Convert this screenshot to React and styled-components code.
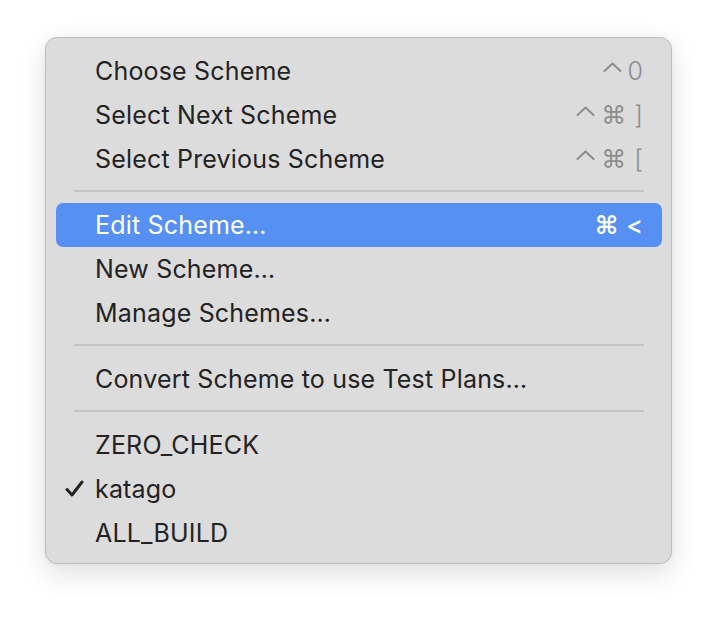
import React from "react";
import styled, { createGlobalStyle } from "styled-components";

const Global = createGlobalStyle`
  html, body { margin: 0; padding: 0; background: #ffffff; }
  body { font-family: Inter, "Noto Sans", "DejaVu Sans", sans-serif; }
`;

const Page = styled.div`
  width: 718px;
  height: 618px;
  padding: 37px 0 0 45px;
  box-sizing: border-box;
  background: #fff;
  overflow: hidden;
`;

const Menu = styled.div`
  width: 627px;
  height: 527px;
  box-sizing: border-box;
  background: #dcdcdc;
  border: 1px solid #bdbdbd;
  border-radius: 12px;
  box-shadow: 0 10px 28px rgba(0, 0, 0, 0.12), 0 0 6px rgba(0, 0, 0, 0.05);
  padding: 11px 9px 0 10px;
  display: flex;
  flex-direction: column;
`;

const Item = styled.div`
  position: relative;
  height: 44px;
  display: flex;
  align-items: center;
  justify-content: space-between;
  padding: 0 19px 0 39px;
  border-radius: 7px;
  font-size: 25px;
  letter-spacing: 0.18px;
  color: ${(p) => (p.$active ? "#ffffff" : "#232323")};
  background: ${(p) => (p.$active ? "#5590f2" : "transparent")};
`;

const Label = styled.span`
  line-height: 1;
`;

const Shortcut = styled.span`
  display: flex;
  gap: 6px;
  align-items: center;
  letter-spacing: 0;
  color: ${(p) => (p.$active ? "#ffffff" : "#8d8d8d")};
`;

const Key = styled.span`
  font-family: Inter, "DejaVu Sans", sans-serif;
  font-size: 25px;
  font-weight: ${(p) => (p.$active ? 500 : 300)};
  line-height: 1;
`;

const Cmd = styled.span`
  font-family: "DejaVu Sans", sans-serif;
  font-size: 25px;
  font-weight: ${(p) => (p.$active ? 700 : 400)};
  line-height: 1;
  margin-right: 2px;
`;

const Caret = styled.svg`
  width: 19px;
  height: 10px;
  margin-top: -8px;
`;

const Separator = styled.div`
  height: 22px;
  display: flex;
  align-items: center;
  padding: 0 18px;
  & > div {
    flex: 1;
    height: 2px;
    background: #c4c4c4;
    margin-top: -3px;
  }
`;

const Check = styled.svg`
  position: absolute;
  left: 9px;
  top: 13px;
  width: 19px;
  height: 17px;
`;

const rows = [
  { label: "Choose Scheme", keys: ["^", "0"] },
  { label: "Select Next Scheme", keys: ["^", "⌘", "]"] },
  { label: "Select Previous Scheme", keys: ["^", "⌘", "["] },
  "sep",
  { label: "Edit Scheme…", keys: ["⌘", "<"], active: true },
  { label: "New Scheme…" },
  { label: "Manage Schemes…" },
  "sep",
  { label: "Convert Scheme to use Test Plans…" },
  "sep",
  { label: "ZERO_CHECK" },
  { label: "katago", checked: true },
  { label: "ALL_BUILD" },
];

function renderKey(k, j, active) {
  if (k === "^")
    return (
      <Caret key={j} viewBox="0 0 19 10">
        <path
          d="M1.5 9 L9.5 1.5 L17.5 9"
          fill="none"
          stroke="currentColor"
          strokeWidth="2"
          strokeLinecap="round"
          strokeLinejoin="round"
        />
      </Caret>
    );
  if (k === "⌘")
    return (
      <Cmd key={j} $active={active}>
        {k}
      </Cmd>
    );
  return (
    <Key key={j} $active={active}>
      {k}
    </Key>
  );
}

export default function App() {
  return (
    <>
      <Global />
      <Page>
        <Menu>
          {rows.map((r, i) =>
            r === "sep" ? (
              <Separator key={i}>
                <div />
              </Separator>
            ) : (
              <Item key={i} $active={r.active}>
                {r.checked && (
                  <Check viewBox="0 0 19 17">
                    <path
                      d="M2 9.5 L7 15 L17 2"
                      fill="none"
                      stroke="#232323"
                      strokeWidth="3"
                      strokeLinecap="round"
                      strokeLinejoin="round"
                    />
                  </Check>
                )}
                <Label>{r.label}</Label>
                {r.keys && (
                  <Shortcut $active={r.active}>
                    {r.keys.map((k, j) => renderKey(k, j, r.active))}
                  </Shortcut>
                )}
              </Item>
            )
          )}
        </Menu>
      </Page>
    </>
  );
}
